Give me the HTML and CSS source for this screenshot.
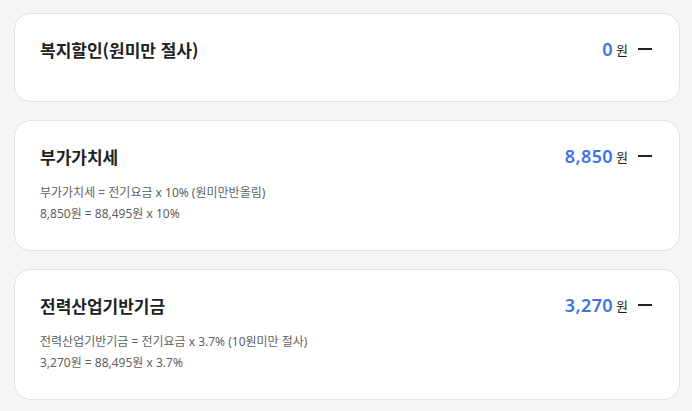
FILE: index.html
```html
<!DOCTYPE html>
<html lang="ko">
<head>
<meta charset="utf-8">
<link rel="stylesheet" href="styles.css">
</head>
<body>
<div class="list">
  <section class="card">
    <div class="head">
      <h2 class="title">복지할인(원미만 절사)</h2>
      <div class="amount"><span class="num">0</span><span class="won">원</span><span class="dash"></span></div>
    </div>
    <div class="desc"></div>
  </section>
  <section class="card">
    <div class="head">
      <h2 class="title">부가가치세</h2>
      <div class="amount"><span class="num">8,850</span><span class="won">원</span><span class="dash"></span></div>
    </div>
    <div class="desc">
      <p>부가가치세 = 전기요금 x 10% (원미만반올림)</p>
      <p>8,850원 = 88,495원 x 10%</p>
    </div>
  </section>
  <section class="card">
    <div class="head">
      <h2 class="title">전력산업기반기금</h2>
      <div class="amount"><span class="num">3,270</span><span class="won">원</span><span class="dash"></span></div>
    </div>
    <div class="desc">
      <p>전력산업기반기금 = 전기요금 x 3.7% (10원미만 절사)</p>
      <p>3,270원 = 88,495원 x 3.7%</p>
    </div>
  </section>
</div>
</body>
</html>
```

FILE: styles.css
```css
* { box-sizing: border-box; }
html, body { margin: 0; padding: 0; }
body {
  background: #f6f6f7;
  font-family: "Noto Sans CJK KR", "Noto Sans", sans-serif;
  color: #222;
}
.list {
  display: flex;
  flex-direction: column;
  gap: 18px;
  padding: 13px 12px 0 14px;
}
.card {
  background: #fff;
  border: 1px solid #e1e2e8;
  border-radius: 16px;
  padding: 23px 27px 26px 25px;
}
.head {
  display: flex;
  align-items: center;
  justify-content: space-between;
  height: 24px;
}
.title {
  margin: 0;
  font-size: 17px;
  font-weight: 700;
  color: #222;
}
.amount {
  display: flex;
  align-items: center;
}
.num {
  font-family: "Noto Sans", sans-serif;
  font-size: 18px;
  font-weight: 600;
  letter-spacing: 0.4px;
  color: #3a74e5;
}
.won {
  font-size: 13px;
  color: #222;
  margin-left: 3px;
}
.dash {
  display: block;
  width: 14px;
  height: 2px;
  background: #222;
  margin-left: 10px;
}
.desc {
  margin-top: 14px;
  font-family: "Noto Sans", "Noto Sans CJK KR", sans-serif;
  font-size: 12px;
  color: #5f5f5f;
}
.desc p {
  margin: 0;
  line-height: 21px;
}
```
